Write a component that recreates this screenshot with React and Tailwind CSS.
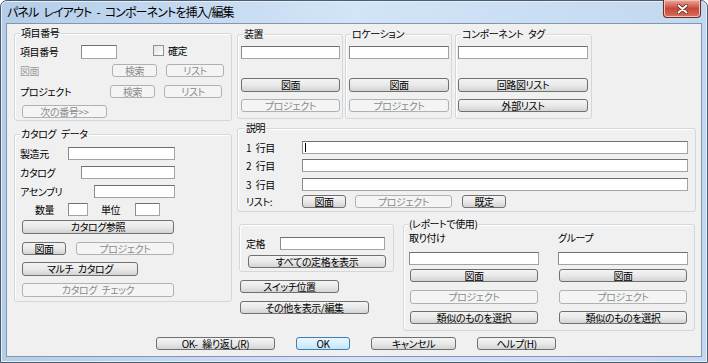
import React from "react";

const txt = "text-[10px] leading-[12px] tracking-[-0.4px] [font-feature-settings:'palt']";
const sp = "\u2002";

function Btn({ w, h = "h-[13px]", children, disabled, primary, className = "" }) {
  const look = disabled
    ? "border-[#adb2b5] bg-[#f4f4f4] text-[#8a8a8a]"
    : primary
    ? "border-[#3c7fb1] bg-gradient-to-b from-[#eaf6fd] via-[#d9f0fc] to-[#bee6fd] text-black"
    : "border-[#707070] bg-gradient-to-b from-[#f4f4f4] via-[#e9e9e9] to-[#d4d4d4] text-black";
  return (
    <div className={`flex shrink-0 items-center justify-center rounded-[3px] border ${h} ${w} ${look} ${className}`}>
      {children}
    </div>
  );
}

function Field({ w, h = "h-[13px]", className = "", children }) {
  return (
    <div className={`shrink-0 border border-[#a3a3a3] border-t-[#6f6f6f] border-l-[#8c8c8c] bg-white ${h} ${w} ${className}`}>
      {children}
    </div>
  );
}

function Group({ label, lx = "left-[5px]", className = "", children }) {
  return (
    <div className={`relative shrink-0 rounded-[3px] border border-[#d0d7dd] shadow-[inset_1px_1px_0_#ffffff] ${className}`}>
      {label && (
        <span className={`absolute -top-[7px] bg-[#f0f0f0] px-[1px] leading-[12px] ${lx}`}>{label}</span>
      )}
      {children}
    </div>
  );
}

function Row({ className = "", children }) {
  return <div className={`flex items-center ${className}`}>{children}</div>;
}

function LeftColumn() {
  return (
    <div className="ml-[7px] mt-[9px] flex w-[218px] flex-col">
      <Group label="項目番号" className="h-[88px] w-[218px]">
        <Row className="mt-[11px] h-[14px]">
          <span className="ml-[5px] w-[61px]">項目番号</span>
          <Field w="w-[36px]" h="h-[14px]" />
          <div className="ml-[36px] h-[11px] w-[11px] self-start border border-[#8e8f8f] bg-gradient-to-br from-[#e2e2e2] to-[#ffffff]" />
          <span className="ml-[4px] self-start leading-[11px]">確定</span>
        </Row>
        <Row className="mt-[5px] h-[13px]">
          <span className="ml-[5px] w-[92px] text-[#9a9a9a]">図面</span>
          <Btn w="w-[45px]" disabled>検索</Btn>
          <Btn w="w-[58px]" disabled className="ml-[9px]">リスト</Btn>
        </Row>
        <Row className="mt-[8px] h-[13px]">
          <span className="ml-[5px] w-[90px]">プロジェクト</span>
          <Btn w="w-[45px]" disabled>検索</Btn>
          <Btn w="w-[58px]" disabled className="ml-[9px]">リスト</Btn>
        </Row>
        <Row className="mt-[7px] h-[13px]">
          <Btn w="w-[85px]" disabled className="ml-[7px]">次の番号&gt;&gt;</Btn>
        </Row>
      </Group>

      <Group label={`カタログ${sp}データ`} className="mt-[13px] h-[168px] w-[218px]">
        <Row className="mt-[12px] h-[13px]">
          <span className="ml-[5px] w-[48px]">製造元</span>
          <Field w="w-[107px]" />
        </Row>
        <Row className="mt-[6px] h-[13px]">
          <span className="ml-[5px] w-[61px]">カタログ</span>
          <Field w="w-[94px]" />
        </Row>
        <Row className="mt-[6px] h-[13px]">
          <span className="ml-[5px] w-[74px]">アセンブリ</span>
          <Field w="w-[81px]" />
        </Row>
        <Row className="mt-[5px] h-[13px]">
          <span className="ml-[20px] w-[33px]">数量</span>
          <Field w="w-[20px]" />
          <span className="ml-[13px] w-[34px]">単位</span>
          <Field w="w-[25px]" />
        </Row>
        <Btn w="w-[152px]" h="h-[14px]" className="ml-[7px] mt-[4px]">カタログ参照</Btn>
        <Row className="mt-[8px] h-[13px]">
          <Btn w="w-[44px]" className="ml-[7px]">図面</Btn>
          <Btn w="w-[98px]" disabled className="ml-[10px]">プロジェクト</Btn>
        </Row>
        <Btn w="w-[116px]" h="h-[14px]" className="ml-[7px] mt-[7px]">{`マルチ${sp}カタログ`}</Btn>
        <Btn w="w-[152px]" h="h-[14px]" disabled className="ml-[7px] mt-[7px]">{`カタログ${sp}チェック`}</Btn>
      </Group>
    </div>
  );
}

function TopBox({ label, w, fw, fx, b1, b2, b2disabled }) {
  return (
    <Group label={label} className={`h-[85px] ${w}`}>
      <Field w={fw} className={`mt-[11px] ${fx}`} />
      <Btn w={fw} h="h-[14px]" className={`mt-[19px] ${fx}`}>{b1}</Btn>
      <Btn w={fw} disabled={b2disabled} className={`mt-[7px] ${fx}`}>{b2}</Btn>
    </Group>
  );
}

function RightColumn() {
  return (
    <div className="ml-[5px] mt-[10px] flex w-[459px] flex-col">
      <div className="flex h-[85px]">
        <TopBox label="装置" w="w-[106px]" fw="w-[99px]" fx="ml-[3px]" b1="図面" b2="プロジェクト" b2disabled />
        <div className="ml-[2px]">
          <TopBox label="ロケーション" w="w-[107px]" fw="w-[100px]" fx="ml-[3px]" b1="図面" b2="プロジェクト" b2disabled />
        </div>
        <div className="ml-[3px]">
          <TopBox label={`コンポーネント${sp}タグ`} w="w-[137px]" fw="w-[130px]" fx="ml-[2px]" b1="回路図リスト" b2="外部リスト" />
        </div>
      </div>

      <Group label="説明" lx="left-[7px]" className="mt-[9px] h-[84px] w-[459px]">
        <Row className="mt-[12px] h-[13px]">
          <span className="ml-[8px] w-[56px]">{`1${sp}行目`}</span>
          <Field w="w-[386px]">
            <div className="ml-[2px] mt-[1px] h-[9px] w-[1px] bg-black" />
          </Field>
        </Row>
        <Row className="mt-[5px] h-[13px]">
          <span className="ml-[8px] w-[56px]">{`2${sp}行目`}</span>
          <Field w="w-[386px]" />
        </Row>
        <Row className="mt-[6px] h-[13px]">
          <span className="ml-[8px] w-[56px]">{`3${sp}行目`}</span>
          <Field w="w-[386px]" />
        </Row>
        <Row className="mt-[4px] h-[13px]">
          <span className="ml-[8px] w-[56px]">リスト:</span>
          <Btn w="w-[44px]">図面</Btn>
          <Btn w="w-[97px]" disabled className="ml-[9px]">プロジェクト</Btn>
          <Btn w="w-[44px]" className="ml-[10px]">既定</Btn>
        </Row>
      </Group>

      <div className="mt-[12px] flex">
        <div className="ml-[2px] flex w-[155px] flex-col">
          <Group className="h-[48px] w-[155px]">
            <Row className="mt-[12px] h-[13px]">
              <span className="ml-[6px] w-[34px]">定格</span>
              <Field w="w-[105px]" />
            </Row>
            <Btn w="w-[138px]" className="ml-[8px] mt-[5px]">すべての定格を表示</Btn>
          </Group>
          <Btn w="w-[99px]" className="ml-[1px] mt-[8px]">スイッチ位置</Btn>
          <Btn w="w-[129px]" className="ml-[1px] mt-[8px]">その他を表示/編集</Btn>
        </div>

        <Group label="(レポートで使用)" lx="left-[4px]" className="ml-[9px] h-[107px] w-[292px]">
          <Row className="mt-[7px] h-[12px]">
            <span className="ml-[5px] w-[149px]">取り付け</span>
            <span>グループ</span>
          </Row>
          <Row className="mt-[8px] h-[13px]">
            <Field w="w-[130px]" className="ml-[5px]" />
            <Field w="w-[130px]" className="ml-[19px]" />
          </Row>
          <Row className="mt-[4px] h-[13px]">
            <Btn w="w-[128px]" className="ml-[6px]">図面</Btn>
            <Btn w="w-[128px]" className="ml-[21px]">図面</Btn>
          </Row>
          <Row className="mt-[8px] h-[14px]">
            <Btn w="w-[128px]" h="h-[14px]" disabled className="ml-[6px]">プロジェクト</Btn>
            <Btn w="w-[128px]" h="h-[14px]" disabled className="ml-[21px]">プロジェクト</Btn>
          </Row>
          <Row className="mt-[7px] h-[13px]">
            <Btn w="w-[128px]" className="ml-[6px]">類似のものを選択</Btn>
            <Btn w="w-[128px]" className="ml-[21px]">類似のものを選択</Btn>
          </Row>
        </Group>
      </div>
    </div>
  );
}

export default function App() {
  return (
    <div className={`h-[363px] w-[708px] font-['Noto_Sans_CJK_JP',sans-serif] text-black ${txt}`}>
      <div className="flex h-[363px] w-[708px] flex-col rounded-t-[7px] border border-[#4d5b6e] bg-gradient-to-r from-[#b4cde8] via-[#d2e4f7] to-[#c2d8f0] px-[5px] pb-[5px] shadow-[inset_0_0_0_1px_#e6f0fb]">
        <div className="flex h-[22px] items-center">
          <span className="pl-[1px] text-[12px] tracking-[-0.9px] text-black">
            {`パネル${sp}レイアウト${sp}-${sp}コンポーネントを挿入/編集`}
          </span>
          <div className="-mt-[1px] ml-auto mr-[1px] flex h-[18px] w-[38px] items-center justify-center self-start rounded-b-[4px] border border-t-0 border-[#6b2b25] bg-gradient-to-b from-[#e9a99c] via-[#c7473a] to-[#d6705c] shadow-[inset_0_0_0_1px_#f2c2b6]">
            <svg width="11" height="10" viewBox="0 0 11 10">
              <path d="M1.5 1.5 L9.5 8.5 M9.5 1.5 L1.5 8.5" stroke="#5a1d17" strokeWidth="3.4" strokeLinecap="round" />
              <path d="M1.5 1.5 L9.5 8.5 M9.5 1.5 L1.5 8.5" stroke="#ffffff" strokeWidth="2" strokeLinecap="round" />
            </svg>
          </div>
        </div>
        <div className="flex flex-1 flex-col border border-[#8396ae] bg-[#f0f0f0]">
          <div className="flex h-[313px]">
            <LeftColumn />
            <RightColumn />
          </div>
          <Row className="h-[13px]">
            <Btn w="w-[119px]" className="ml-[149px]">{`OK-${sp}繰り返し(R)`}</Btn>
            <Btn w="w-[54px]" primary className="ml-[21px]">OK</Btn>
            <Btn w="w-[85px]" className="ml-[21px]">キャンセル</Btn>
            <Btn w="w-[79px]" className="ml-[21px]">ヘルプ(H)</Btn>
          </Row>
        </div>
      </div>
    </div>
  );
}
